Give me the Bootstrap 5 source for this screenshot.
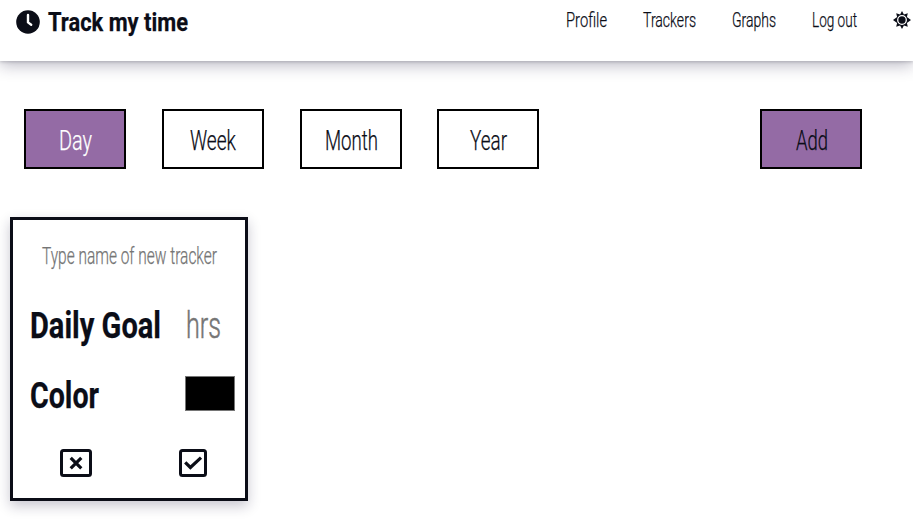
<!DOCTYPE html>
<html lang="en">
<head>
<meta charset="utf-8">
<meta name="viewport" content="width=device-width, initial-scale=1">
<title>Track my time</title>
<link href="https://cdn.jsdelivr.net/npm/bootstrap@5.3.0/dist/css/bootstrap.min.css" rel="stylesheet">
<style>
body{font-family:Roboto,"Liberation Sans",sans-serif;font-weight:300;color:#0b0d17;background:#fff;height:531px;overflow:hidden}
/* condensed labels: the script fits the glyphs to the label's width */
.fit{display:block;flex:none;white-space:nowrap;text-align:left;-webkit-text-stroke:.25px currentColor}
.fit>span{display:inline-block;transform-origin:0 50%}
.site-head{height:61px;padding:0 2px 0 16px;box-shadow:0 1px 3px rgba(11,10,20,.18),0 4px 15px rgba(27,20,60,.3)}
.brand{height:44px;gap:8px;font-size:26px;font-weight:700;color:inherit}
.menu{height:40px;gap:36px;font-size:20px}
.menu a{color:inherit}
.periods{padding:48px 51px 0 24px}
.period-set{gap:35.8px}
.period{width:102px;height:60px;border:2px solid #000;border-radius:0;font-size:27px;font-weight:300;padding:4px 0 0 1px;color:#0b0d17;background:#fff}
.period.on{background:#946ba5}
.period.day{color:#fff}
.tracker{width:238px;height:284px;margin:48px 0 0 10px;border:3px solid #0b0d17;box-shadow:0 5px 12px rgba(27,20,60,.24)}
.tr-name{height:72px;font-size:23px;color:#757575;padding:2px 0 0 29px}
.tr-goal{height:67px;font-size:36px;padding:0 24px 0 17px}
.tr-color{height:73px;font-size:36px;padding:0 10px 0 17px}
.tr-goal b,.tr-color b{font-weight:700}
.muted{color:#757575;-webkit-text-stroke-width:.5px}
.swatch{width:50px;height:35px;background:#000;border:1px solid #767676;margin-bottom:4px}
.tr-act{height:62px;padding:0 38.5px 0 47px}
</style>
<script src="https://cdn.jsdelivr.net/npm/bootstrap@5.3.0/dist/js/bootstrap.bundle.min.js"></script>
</head>
<body>
<header class="site-head d-flex justify-content-between align-items-start">
  <a class="brand d-flex align-items-center text-decoration-none" href="#">
    <svg width="24" height="24" viewBox="0 0 24 24"><circle cx="12" cy="12" r="11.8" fill="#0b0d17"/><path d="M12 5v7.4l3.2 2.3" fill="none" stroke="#fff" stroke-width="2.4" stroke-linecap="round" stroke-linejoin="round"/></svg>
    <span class="fit" data-w="140"><span>Track my time</span></span>
  </a>
  <nav class="menu d-flex align-items-center">
    <a class="text-decoration-none fit" data-w="41" href="#"><span>Profile</span></a>
    <a class="text-decoration-none fit" data-w="53" href="#"><span>Trackers</span></a>
    <a class="text-decoration-none fit" data-w="44" href="#"><span>Graphs</span></a>
    <a class="text-decoration-none fit" data-w="45" href="#"><span>Log out</span></a>
    <svg width="18" height="18" viewBox="0 0 18 18"><path fill="#0b0d17" d="M9 0l1.9 3.4 3.9-1.2-.9 3.9L18 9l-4.1 2.9.9 3.9-3.9-1.2L9 18l-1.9-3.4-3.9 1.2.9-3.9L0 9l4.1-2.9-.9-3.9 3.9 1.2z"/><circle cx="9" cy="9" r="4.3" fill="#0b0d17" stroke="#fff" stroke-width="1.3"/></svg>
  </nav>
</header>
<main>
  <div class="periods d-flex justify-content-between">
    <div class="period-set d-flex">
      <button class="period on day d-flex justify-content-center align-items-center"><span class="fit" data-w="33"><span>Day</span></span></button>
      <button class="period d-flex justify-content-center align-items-center"><span class="fit" data-w="46"><span>Week</span></span></button>
      <button class="period d-flex justify-content-center align-items-center"><span class="fit" data-w="53"><span>Month</span></span></button>
      <button class="period d-flex justify-content-center align-items-center"><span class="fit" data-w="37"><span>Year</span></span></button>
    </div>
    <button class="period on d-flex justify-content-center align-items-center"><span class="fit" data-w="32"><span>Add</span></span></button>
  </div>
  <section class="tracker">
    <div class="tr-name d-flex align-items-center"><span class="fit" data-w="175"><span>Type name of new tracker</span></span></div>
    <div class="tr-goal d-flex align-items-center justify-content-between"><b class="fit" data-w="131"><span>Daily Goal</span></b><span class="fit muted" data-w="35"><span>hrs</span></span></div>
    <div class="tr-color d-flex align-items-center justify-content-between"><b class="fit" data-w="69"><span>Color</span></b><div class="swatch"></div></div>
    <div class="tr-act d-flex align-items-center justify-content-between">
      <svg width="32" height="28" viewBox="0 0 32 28" fill="none" stroke="#0b0d17"><rect x="1.5" y="1.5" width="29" height="25" rx="2" stroke-width="3"/><path d="M10.7 8.9l10.6 10.4M21.3 8.9L10.7 19.3" stroke-width="3.2"/></svg>
      <svg width="28" height="28" viewBox="0 0 28 28" fill="none" stroke="#0b0d17"><rect x="1.5" y="1.5" width="25" height="25" rx="2" stroke-width="3"/><path d="M6.2 13.3l5.2 5.2L22 8.6" stroke-width="3.2"/></svg>
    </div>
  </section>
</main>
<script>
document.querySelectorAll('.fit').forEach(function(el){
  var s=el.firstElementChild,w=+el.dataset.w,n=s.getBoundingClientRect().width;
  el.style.width=w+'px';
  s.style.transform='scaleX('+w/n+')';
});
</script>
</body>
</html>
